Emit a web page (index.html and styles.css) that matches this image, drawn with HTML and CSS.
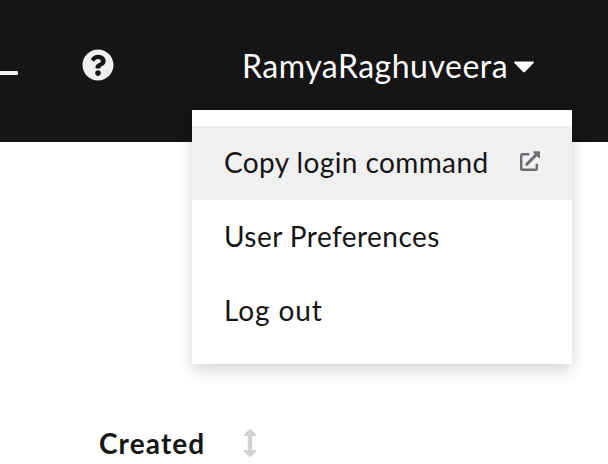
FILE: index.html
```html
<!DOCTYPE html>
<html lang="en">
<head>
<meta charset="utf-8">
<title>Console</title>
<link rel="stylesheet" href="styles.css">
</head>
<body>
<header class="masthead">
  <span class="mark"></span>
  <svg class="help" viewBox="0 0 512 512"><path d="M504 256c0 136.997-111.043 248-248 248S8 392.997 8 256C8 119.083 119.043 8 256 8s248 111.083 248 248zM262.655 90c-54.497 0-89.255 22.957-116.549 63.758-3.536 5.286-2.353 12.415 2.715 16.258l34.699 26.31c5.205 3.947 12.621 3.008 16.665-2.122 17.864-22.658 30.113-35.797 57.303-35.797 20.429 0 45.698 13.148 45.698 32.958 0 14.976-12.363 22.667-32.534 33.976C247.128 238.528 216 254.941 216 296v4c0 6.627 5.373 12 12 12h56c6.627 0 12-5.373 12-12v-1.333c0-28.462 83.186-29.647 83.186-106.667 0-58.002-60.165-102-116.531-102zM256 338c-25.365 0-46 20.635-46 46 0 25.364 20.635 46 46 46s46-20.636 46-46c0-25.364-20.635-46-46-46z"/></svg>
  <div class="user">
    <span class="username">RamyaRaghuveera</span>
    <svg class="caret" viewBox="0 0 20 12"><path d="M1 .5h18c.9 0 1.2.9.6 1.5l-8.700 8.900c-.5.5-1.300.5-1.800 0L.4 2C-.2 1.400.1.5 1 .5z"/></svg>
    <nav class="menu">
      <a class="item active"><span class="copy">Copy login command</span>
        <svg class="external" viewBox="0 0 20 20"><path class="frame" d="M9.300 3.200H2.500Q1.200 3.200 1.200 4.500V17.500Q1.200 18.800 2.500 18.800H15.500Q16.800 18.800 16.800 17.500V12.700"/><path class="shaft" d="M6.800 13.200L16.500 3.500"/><path class="head" d="M13.200.3H19.300Q20 .3 20 1V7.200L18.200 6.500 13.500 1.900Z"/></svg>
      </a>
      <a class="item"><span class="prefs">User Preferences</span></a>
      <a class="item"><span class="logout">Log out</span></a>
    </nav>
  </div>
</header>
<main class="content">
  <div class="column-head">
    <span class="created">Created</span>
    <svg class="sort" viewBox="0 0 14 28"><path d="M7 0Q7.500 0 8 .5L12.900 5.200Q13.600 6.700 12.200 7H9.200V21H12.200Q13.600 21.300 12.900 22.800L8 27.500Q7 28.300 6 27.500L1.100 22.800Q.4 21.300 1.800 21H4.800V7H1.800Q.4 6.700 1.100 5.200L6 .5Q6.500 0 7 0z"/></svg>
  </div>
</main>
</body>
</html>
```

FILE: styles.css
```css
* { box-sizing: border-box; }
body {
  margin: 0;
  height: 464px;
  overflow: hidden;
  background: #fff;
  color: #151515;
  font-family: Lato, "Liberation Sans", sans-serif;
}
.masthead {
  display: flex;
  height: 142px;
  background: #151515;
}
.mark {
  width: 18px;
  height: 4px;
  margin-top: 71px;
  border-radius: 0 1px 1px 0;
  background: #f0f0f0;
}
.help {
  width: 32px;
  height: 32px;
  margin: 49px 0 0 64px;
  fill: #f0f0f0;
}
.user {
  position: relative;
  display: flex;
  width: 380px;
  height: 110px;
  margin-left: 78px;
  padding-left: 50px;
  color: #fff;
}
.username {
  width: 272px;
  height: 40px;
  margin-top: 46px;
  font-size: 32px;
  line-height: 40px;
  letter-spacing: .5px;
  white-space: nowrap;
}
.caret {
  width: 20px;
  height: 12px;
  margin-top: 61px;
  fill: #fff;
}
.menu {
  position: absolute;
  top: 110px;
  left: 0;
  width: 380px;
  height: 254px;
  padding: 16px 0;
  background: #fff;
  color: #151515;
  box-shadow: 0 8px 16px rgba(3, 3, 3, .12), 0 0 12px rgba(3, 3, 3, .06);
}
.item {
  display: flex;
  align-items: center;
  justify-content: space-between;
  height: 74px;
  padding: 0 32px;
  font-size: 28px;
  line-height: 36px;
  white-space: nowrap;
}
.item span { padding-bottom: 2px; }
.copy { letter-spacing: .4px; }
.prefs { letter-spacing: .45px; }
.logout { letter-spacing: .9px; }
.active { background: #f0f0f0; }
.external {
  width: 20px;
  height: 20px;
  margin-top: -4px;
}
.frame, .shaft {
  fill: none;
  stroke: #6a6e73;
  stroke-width: 2.4;
}
.shaft { stroke-width: 3; stroke-linecap: round; }
.head { fill: #6a6e73; }
.content { padding: 283px 0 0 99px; }
.column-head {
  display: flex;
  align-items: center;
  height: 36px;
}
.created {
  width: 144px;
  font-size: 28px;
  font-weight: 700;
  line-height: 36px;
  letter-spacing: 1.1px;
}
.sort {
  width: 14px;
  height: 28px;
  fill: #d2d2d2;
}
```
